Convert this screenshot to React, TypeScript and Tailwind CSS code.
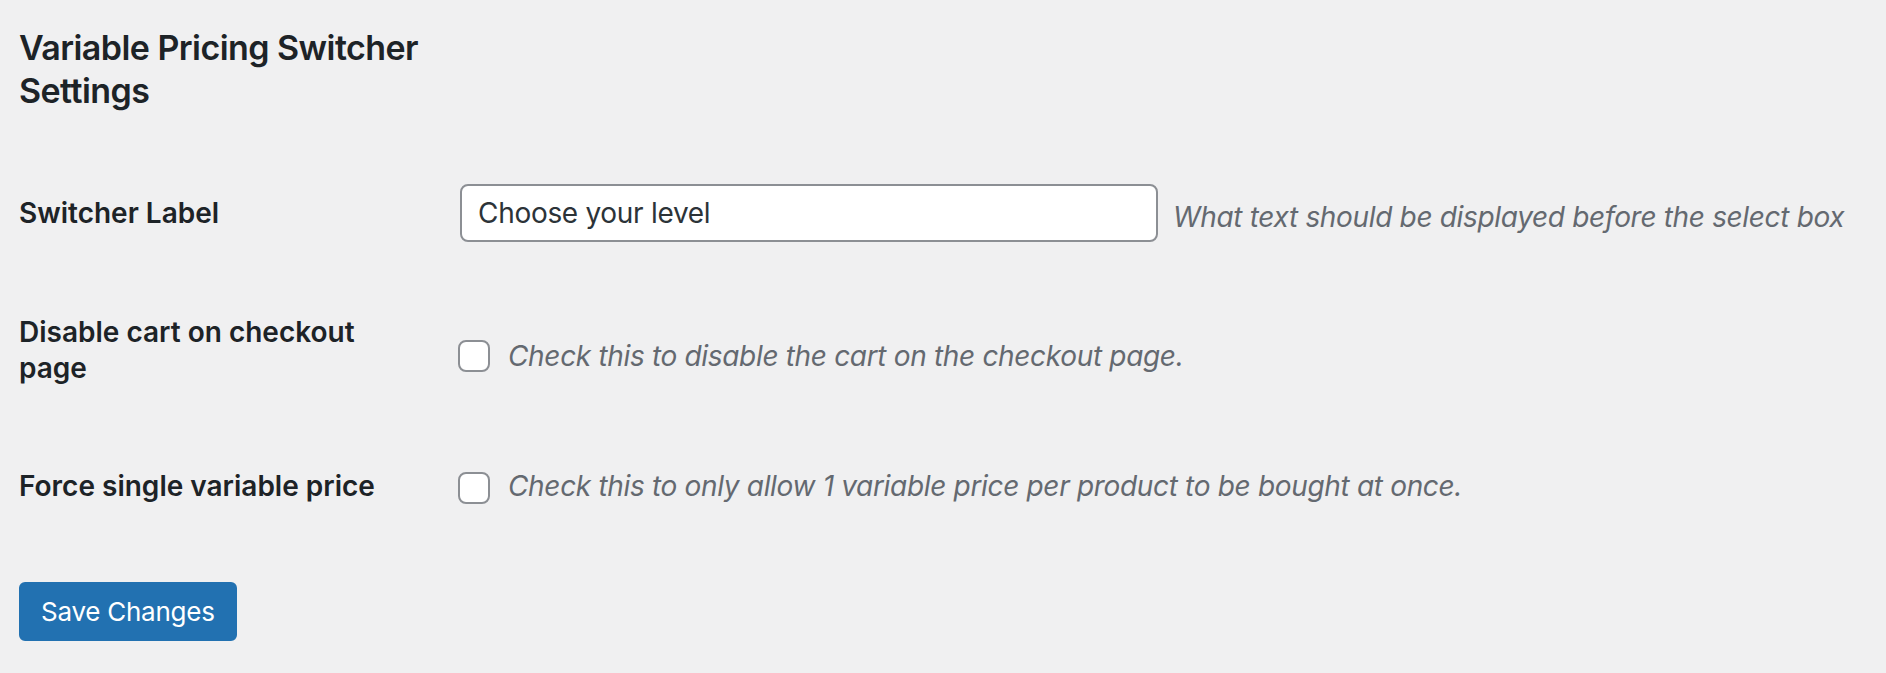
import React, { useState } from 'react';

// WP-style settings page for the variable pricing switcher
const font = { fontFamily: 'Inter, "Liberation Sans", sans-serif' };

export default function App() {
  const [label, setLabel] = useState('Choose your level');
  const [disableCart, setDisableCart] = useState(false);
  const [forceSingle, setForceSingle] = useState(false);

  return (
    <div
      className="min-h-screen bg-[#f0f0f1] pl-[19px] pt-[26px] text-[#1d2327] font-[Inter,'Liberation_Sans',sans-serif]"
    >
      <h2 className="w-[420px] text-[34px] font-semibold leading-[43px] tracking-[-0.55px]">
        Variable Pricing Switcher Settings
      </h2>

      <div className="mt-[72px] flex h-[58px] items-center">
        <div className="w-[441px] shrink-0 text-[28px] font-semibold leading-[36px]">Switcher Label</div>
        <input
          type="text"
          value={label}
          onChange={(e) => setLabel(e.target.value)}
          className="h-[58px] w-[698px] rounded-[8px] border-2 border-[#8c8f94] bg-white px-[16px] text-[28px] tracking-[-0.3px] text-[#2c3338] outline-none"
          style={font}
        />
        <span className="ml-[15px] mt-[8px] text-[28px] italic tracking-[-0.33px] text-[#646970]">
          What text should be displayed before the select box
        </span>
      </div>

      <div className="mt-[72px] flex items-start">
        <div className="w-[384px] shrink-0 text-[28px] font-semibold leading-[36px]">
          Disable cart on checkout page
        </div>
        <div className="ml-[55px] mt-[24px] flex items-center">
          <Checkbox checked={disableCart} onChange={setDisableCart} />
          <span className="ml-[18px] text-[28px] italic leading-[36px] tracking-[-0.33px] text-[#646970]">
            Check this to disable the cart on the checkout page.
          </span>
        </div>
      </div>

      <div className="mt-[82px] flex h-[36px] items-center">
        <div className="w-[384px] shrink-0 text-[28px] font-semibold leading-[36px]">
          Force single variable price
        </div>
        <div className="ml-[55px] mt-[4px] flex items-center">
          <Checkbox checked={forceSingle} onChange={setForceSingle} />
          <span className="ml-[18px] -mt-[4px] text-[28px] italic leading-[36px] tracking-[-0.33px] text-[#646970]">
            Check this to only allow 1 variable price per product to be bought at once.
          </span>
        </div>
      </div>

      <button
        className="mt-[78px] h-[59px] rounded-[6px] border-2 border-[#2271b1] bg-[#2271b1] px-[20px] text-[26px] tracking-[-0.25px] text-white"
        style={font}
      >
        Save Changes
      </button>
    </div>
  );
}

function Checkbox({ checked, onChange }: { checked: boolean; onChange: (v: boolean) => void }) {
  return (
    <button
      type="button"
      onClick={() => onChange(!checked)}
      className="flex h-[32px] w-[32px] shrink-0 items-center justify-center rounded-[8px] border-2 border-[#8c8f94] bg-white"
    >
      {checked && (
        <svg viewBox="0 0 20 20" className="h-[26px] w-[26px] text-[#3582c4]" fill="currentColor">
          <path d="M14.83 4.89l1.34.94-5.81 8.38H9.02L5.78 9.67l1.34-1.25 2.57 2.4z" />
        </svg>
      )}
    </button>
  );
}
